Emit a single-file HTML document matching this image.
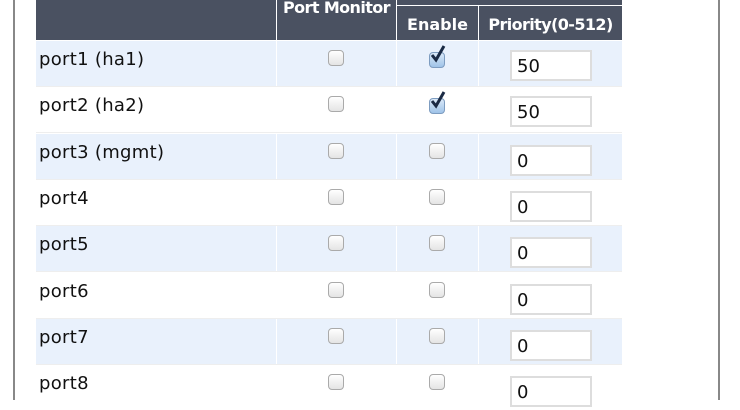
<!DOCTYPE html><html><head><style>
body{margin:0;width:740px;height:400px;background:#fff;position:relative;overflow:hidden;font-family:"DejaVu Sans","Liberation Sans",sans-serif;}
.a{position:absolute}
.hd{background:#4a5161;color:#fff;font-size:16px;font-weight:bold;white-space:nowrap}
.row{position:absolute;left:36px;width:586px;height:45px}
.cell{position:absolute;top:0;height:45px}
.lbl{position:absolute;left:3px;top:8px;font-size:18px;color:#111;white-space:nowrap;letter-spacing:0.3px}
.cb{position:absolute;width:16px;height:16px;border:1px solid #aaa;border-radius:4px;background:linear-gradient(#fff,#e4e4e4);box-sizing:border-box}
.cb.on{background:linear-gradient(#dbe9f8,#9fc3e8);border-color:#7d9cc0}
.inp{position:absolute;left:474px;width:82px;height:31px;border:2px solid #ddd;box-sizing:border-box;background:#fff;font-size:18px;padding:4px 0 0 5px;color:#111}
</style></head><body>
<div class="a" style="left:13px;top:0;width:2px;height:400px;background:#888"></div>
<div class="a" style="left:718px;top:0;width:2px;height:400px;background:#888"></div>
<div class="a hd" style="left:36px;top:0;width:240px;height:40px"></div>
<div class="a hd" style="left:277px;top:0;width:119px;height:40px;text-align:center;line-height:16px;letter-spacing:-0.6px">Port Monitor</div>
<div class="a hd" style="left:397px;top:0;width:225px;height:5px"></div>
<div class="a hd" style="left:397px;top:6px;width:81px;height:34px;text-align:center;line-height:38px">Enable</div>
<div class="a hd" style="left:479px;top:6px;width:143px;height:34px;text-align:center;line-height:38px;letter-spacing:-0.6px">Priority(0-512)</div>
<div id="rows"></div>
<script>
var names=["port1 (ha1)","port2 (ha2)","port3 (mgmt)","port4","port5","port6","port7","port8"];
var h="";
for(var i=0;i<8;i++){
 var t=Math.round(41+46.3*i);var bg=i%2==0?"#e9f1fc":"#fff";
 h+='<div class="row" style="top:'+t+'px">'+
 '<div class="cell" style="left:0;width:240px;background:'+bg+'"></div>'+
 '<div class="cell" style="left:241px;width:119px;background:'+bg+'"></div>'+
 '<div class="cell" style="left:361px;width:81px;background:'+bg+'"></div>'+
 '<div class="cell" style="left:443px;width:143px;background:'+bg+'"></div>'+
 '<div class="lbl">'+names[i]+'</div>'+
 '<div class="cb" style="left:292px;top:9px"></div>'+
 (i<2?'<div class="cb on" style="left:393px;top:11px"></div><svg class="a" style="left:393px;top:3px" width="20" height="20" viewBox="0 0 20 20"><path d="M3 11 L7 16 L15 2" stroke="#1a2a44" stroke-width="3" fill="none"/></svg>':'<div class="cb" style="left:393px;top:9px"></div>')+
 '<div class="inp" style="top:'+(i<2?9:11)+'px">'+(i<2?"50":"0")+'</div></div>';
 if(i<7)h+='<div class="a" style="left:36px;width:586px;height:1px;top:'+(t+45)+'px;background:#eee"></div>';
}
document.getElementById("rows").innerHTML=h;
</script>
</body></html>
